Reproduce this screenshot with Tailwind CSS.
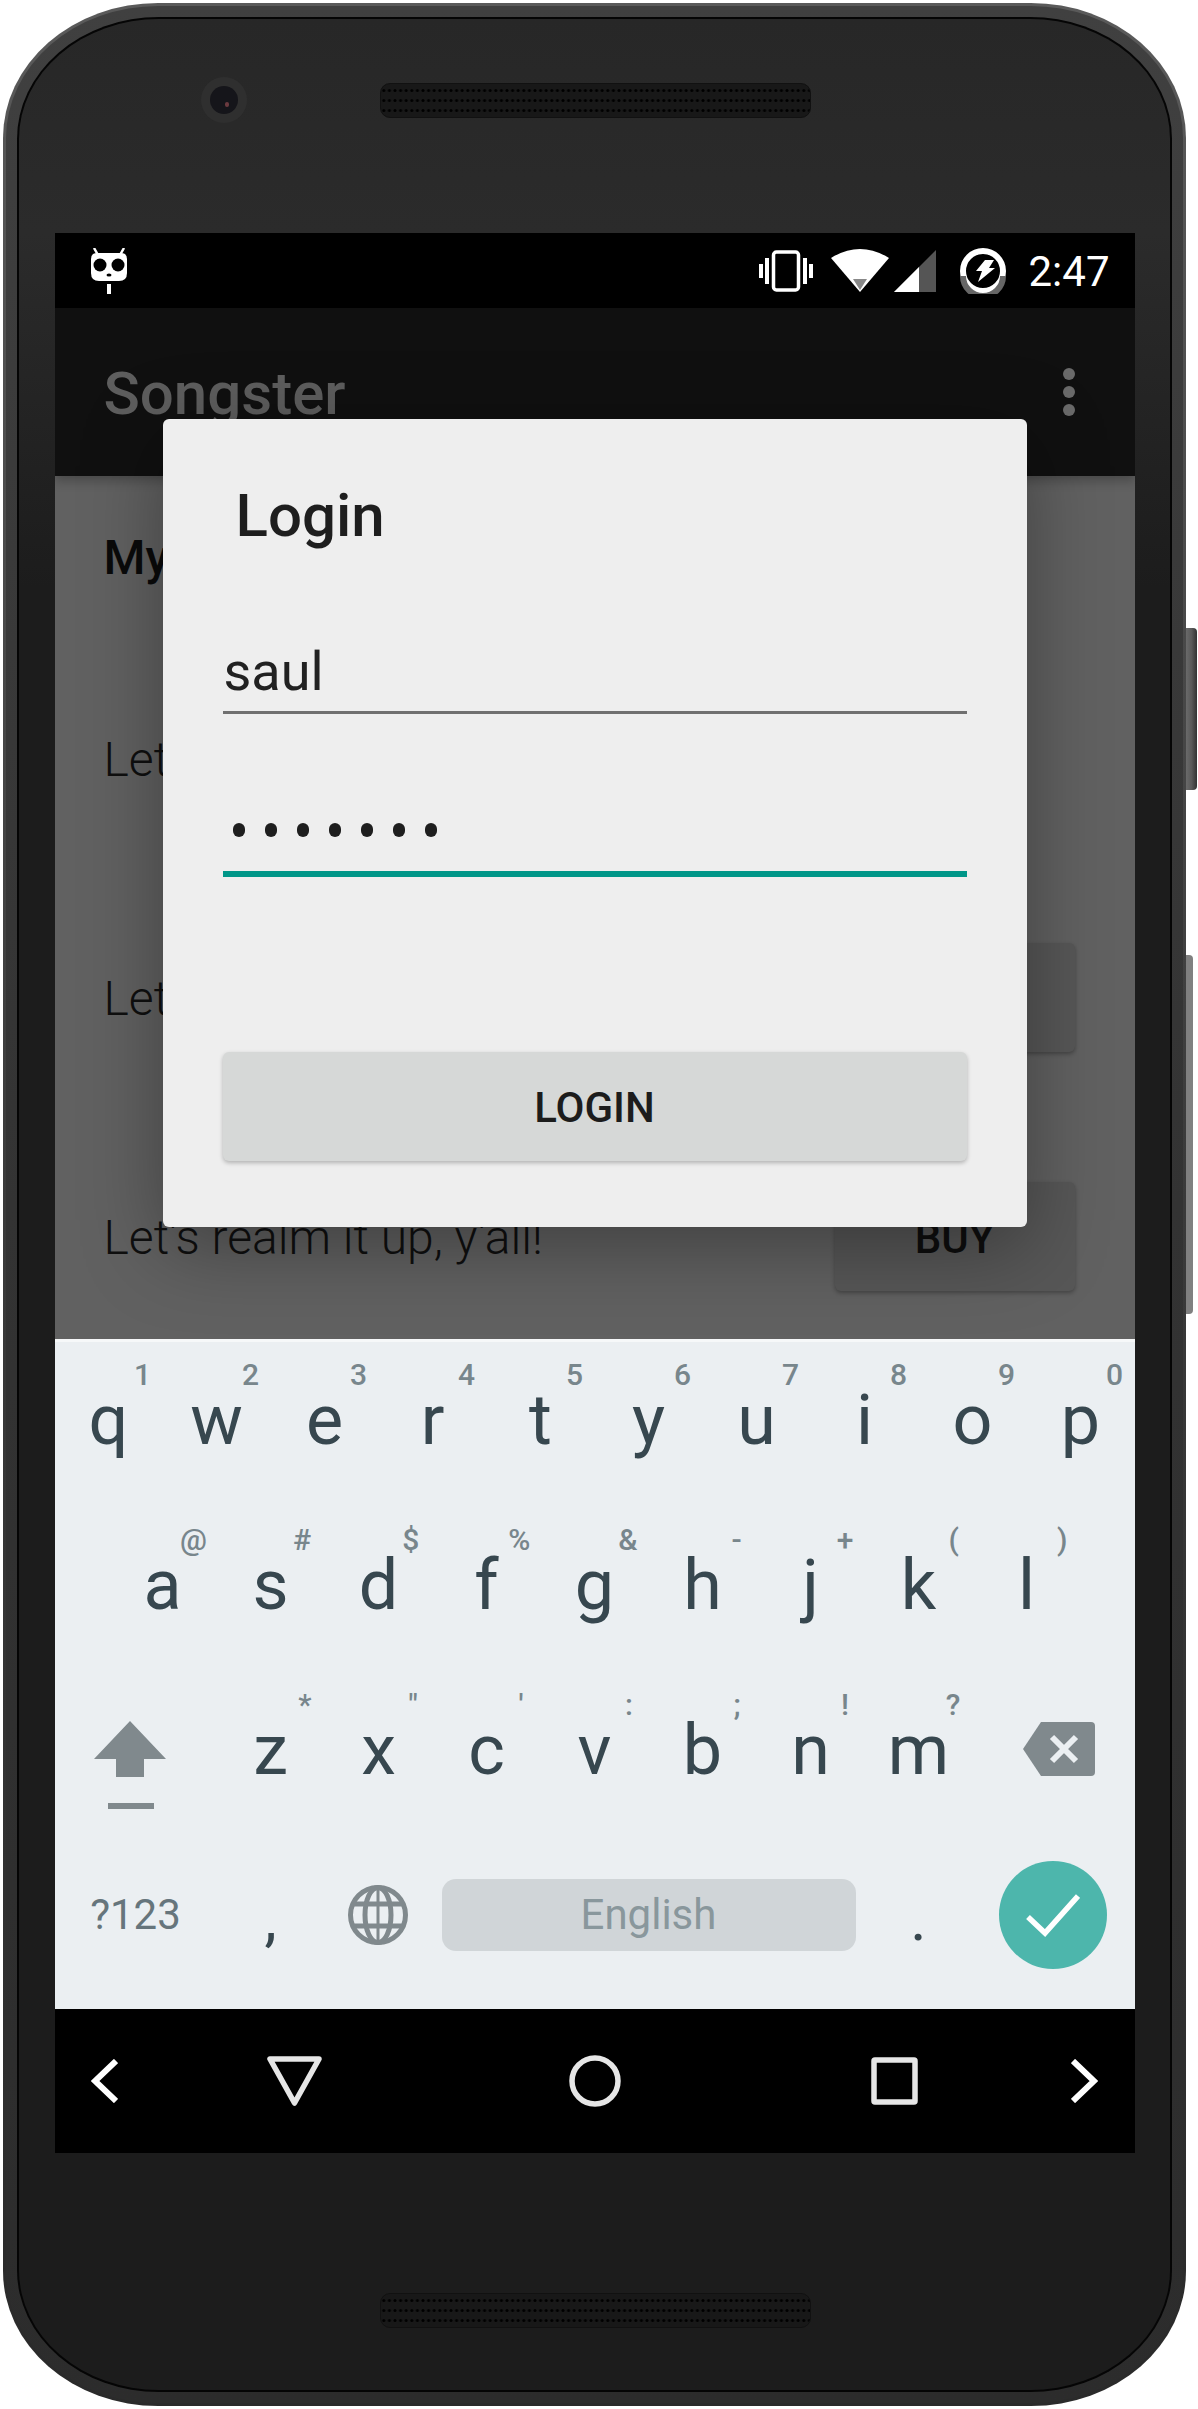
<!DOCTYPE html>
<html lang="en">

<head>
  <meta charset="UTF-8">
  <meta name="viewport" content="width=device-width, initial-scale=1.0">
  <title>Songster</title>
  <script src="https://cdn.jsdelivr.net/npm/@tailwindcss/browser@4"></script>
</head>

<body class="bg-white font-['Roboto',sans-serif] w-[1198px] h-[2409px] overflow-hidden relative">
  <!-- side buttons -->
  <div class="absolute left-[1186px] top-[628px] w-[11px] h-[162px] rounded-r-sm bg-gradient-to-r from-[#6a6a6a] via-[#5a5a5a] to-[#333]"></div>
  <div class="absolute left-[1186px] top-[955px] w-[7px] h-[359px] rounded-r-sm bg-[#808080]"></div>

  <!-- phone body -->
  <div class="absolute left-[3px] top-[3px] w-[1183px] h-[2403px] rounded-[155px/135px] bg-gradient-to-b from-[#5a5a5a] via-[#3a3a3a] to-[#2a2a2a] p-[3px]">
    <div class="w-full h-full rounded-[152px/132px] bg-gradient-to-b from-[#404040] via-[#333] to-[#2c2c2c] p-[11px]">
      <div class="w-full h-full rounded-[142px/122px] bg-[#050505] p-[2px]">
        <div class="w-full h-full rounded-[140px/120px] bg-[linear-gradient(#272727_0%,#2b2b2b_9%,#1c1c1c_24%,#1c1c1c_100%)] flex flex-col items-center overflow-hidden">

          <!-- top bezel -->
          <div class="h-[214px] w-full shrink-0 relative">
            <div class="absolute left-[182px] top-[58px] w-[46px] h-[46px] rounded-full bg-[#2f2f2f] flex items-center justify-center">
              <div class="w-[28px] h-[28px] rounded-full bg-[#15151a] relative">
                <div class="absolute left-[15px] top-[16px] w-[4px] h-[5px] rounded-full bg-[#6b3a3f]"></div>
              </div>
            </div>
            <div class="absolute left-[361px] top-[64px] w-[431px] h-[35px] rounded-[10px] bg-[#181818] border border-[#111] overflow-hidden">
              <svg width="430" height="33"><defs><pattern id="dotsTop" width="5.6" height="10" patternUnits="userSpaceOnUse"><circle cx="2.8" cy="6.500" r="1.500" fill="#000"/></pattern></defs><rect width="430" height="33" fill="url(#dotsTop)"/></svg>
            </div>
          </div>

          <!-- screen -->
          <div class="w-[1080px] h-[1920px] shrink-0 relative flex flex-col overflow-hidden">
            <!-- status bar -->
            <div class="h-[75px] bg-black flex items-center pl-[36px] pr-[25px] shrink-0">
              <svg width="36" height="46" viewBox="0 0 36 46">
                <path d="M3 0l4 7M33 0l-4 7" stroke="#fff" stroke-width="2.500"/>
                <path d="M6 5h24q6 0 6 6v14q0 8-8 8H8q-8 0-8-8V11q0-6 6-6z" fill="#fff"/>
                <circle cx="9" cy="17" r="6.500" fill="#000"/><circle cx="27" cy="17" r="6.500" fill="#000"/>
                <ellipse cx="18" cy="27" rx="2.500" ry="1.500" fill="#000"/>
                <rect x="16" y="36" width="4" height="10" fill="#fff"/>
              </svg>
              <div class="ml-auto flex items-center">
                <svg width="54" height="42" viewBox="0 0 54 42">
                  <rect x="14.500" y="2" width="25" height="38" rx="3" fill="none" stroke="#fff" stroke-width="3.500"/>
                  <path d="M0 14h4v14H0zM6 8h4v26H6zM44 8h4v26h-4zM50 14h4v14h-4z" fill="#fff"/>
                </svg>
                <svg class="ml-[18px]" width="58" height="44" viewBox="0 0 58 44">
                  <path d="M0 9Q29-9 58 9L29 43z" fill="#fff"/><path d="M22 30h14l-7 11z" fill="#888"/>
                </svg>
                <svg class="ml-[5px]" width="42" height="42" viewBox="0 0 42 42">
                  <path d="M0 42L42 0v42z" fill="#555"/><path d="M0 42L25 17v25z" fill="#fff"/>
                </svg>
                <svg class="ml-[24px]" width="46" height="46" viewBox="0 0 46 46">
                  <circle cx="23" cy="23" r="20" fill="none" stroke="#fff" stroke-width="6"/>
                  <path d="M3 28A20 20 0 0 0 43 28" fill="none" stroke="#666" stroke-width="6"/>
                  <path d="M25 12h9l-5 8h6L18 34l4-11h-6z" fill="#fff"/>
                </svg>
                <span class="ml-[23px] mt-[2px] text-[42px] leading-none text-white">2:47</span>
              </div>
            </div>

            <!-- app bar -->
            <div class="h-[168px] bg-[#101010] shrink-0 flex items-center pl-[49px] pr-[60px] relative z-10 shadow-[0_5px_10px_rgba(0,0,0,0.25)]">
              <span class="text-[60px] font-medium text-[#5e5e5e] leading-none mt-[4px]">Songster</span>
              <div class="ml-auto flex flex-col gap-[6px]">
                <div class="w-[12px] h-[12px] rounded-full bg-[#6a6a6a]"></div>
                <div class="w-[12px] h-[12px] rounded-full bg-[#6a6a6a]"></div>
                <div class="w-[12px] h-[12px] rounded-full bg-[#6a6a6a]"></div>
              </div>
            </div>

            <!-- song list, dimmed -->
            <div class="h-[863px] bg-[#616161] shrink-0 pl-[49px] pr-[60px] pt-[60px] flex flex-col">
              <div class="h-[44px] mb-[124px] text-[48px] leading-[44px] font-medium text-[#0a0a0a]">My</div>
              <div class="flex flex-col gap-[130px]">
                <div class="h-[109px] flex items-center text-[48px] font-light text-[#0f0f0f]"><span class="mt-[2px]">Let's realm it up, y'all!</span></div>
                <div class="h-[109px] flex items-center justify-between">
                  <span class="mt-[2px] text-[48px] font-light text-[#0f0f0f]">Let's realm it up, y'all!</span>
                  <div class="w-[240px] h-[109px] pt-[4px] rounded-[6px] bg-[#575757] shadow-[0_2px_4px_rgba(0,0,0,0.3)] flex items-center justify-center text-[42px] font-medium text-[#0e0e0e]">BUY</div>
                </div>
                <div class="h-[109px] flex items-center justify-between">
                  <span class="mt-[2px] text-[48px] font-light text-[#0f0f0f]">Let's realm it up, y'all!</span>
                  <div class="w-[240px] h-[109px] pt-[4px] rounded-[6px] bg-[#575757] shadow-[0_2px_4px_rgba(0,0,0,0.3)] flex items-center justify-center text-[42px] font-medium text-[#0e0e0e]">BUY</div>
                </div>
              </div>
            </div>

            <!-- keyboard -->
            <div class="h-[670px] bg-[#ebeff2] border-t-[3px] border-[#f6f8f9] shrink-0 flex flex-col">
              <div id="row1" class="flex h-[165px]"></div>
              <div id="row2" class="flex h-[165px] pl-[54px]"></div>
              <div class="flex h-[165px]">
                <div class="w-[150px] pt-[49px] flex justify-center">
                  <svg width="72" height="88" viewBox="0 0 72 88">
                    <path d="M36 0L72 38H50V56H22V38H0z" fill="#80898d"/>
                    <rect x="14" y="82" width="46" height="6" fill="#80898d"/>
                  </svg>
                </div>
                <div id="row3" class="flex ml-[12px]"></div>
                <div class="ml-[50px] pt-[50px]">
                  <svg width="72" height="54" viewBox="0 0 72 54">
                    <path d="M18 0H68q4 0 4 4V50q0 4-4 4H18L0 27z" fill="#80898d"/>
                    <path d="M29 15L53 39M53 15L29 39" stroke="#ebeff2" stroke-width="6"/>
                  </svg>
                </div>
              </div>
              <div class="flex items-center h-[172px] pb-[16px]">
                <div class="w-[162px] text-center text-[42px] leading-none text-[#66757c]">?123</div>
                <div class="w-[108px] text-center text-[62px] leading-none pt-[8px] text-[#37474f]">,</div>
                <div class="w-[106px] flex justify-center">
                  <svg width="60" height="60" viewBox="0 0 60 60" fill="none" stroke="#80898d" stroke-width="5">
                    <circle cx="30" cy="30" r="27.500"/>
                    <ellipse cx="30" cy="30" rx="13" ry="27.500"/>
                    <path d="M5 19H55M5 41H55" />
                    <path d="M30 3V57" stroke-width="3"/>
                  </svg>
                </div>
                <div class="w-[414px] h-[72px] ml-[11px] pb-[2px] rounded-[14px] bg-[#d0d5d8] flex items-center justify-center text-[42px] text-[#89979c]">English</div>
                <div class="w-[108px] ml-[9px] text-center text-[62px] leading-none pt-[8px] text-[#37474f]">.</div>
                <div class="w-[108px] h-[108px] ml-[26px] rounded-full bg-[#4db6ac] flex items-center justify-center">
                  <svg width="54" height="44" viewBox="0 0 54 44" fill="none" stroke="#fff" stroke-width="5.500">
                    <path d="M2 24L19 40L52 3"/>
                  </svg>
                </div>
              </div>
            </div>

            <!-- nav bar -->
            <div class="h-[144px] bg-black shrink-0 flex items-center pl-[36px]">
              <svg width="27" height="44" viewBox="0 0 27 44" fill="none" stroke="#fff" stroke-width="6"><path d="M25 2L4 22L25 42"/></svg>
              <svg class="ml-[149px]" width="55" height="50" viewBox="0 0 55 50" fill="none" stroke="#e6e6e6" stroke-width="5.500" stroke-linejoin="round"><path d="M3 3H52L27.500 47z"/></svg>
              <svg class="ml-[247px]" width="52" height="52" viewBox="0 0 52 52" fill="none" stroke="#e6e6e6" stroke-width="5.500"><circle cx="26" cy="26" r="23"/></svg>
              <svg class="ml-[250px]" width="47" height="48" viewBox="0 0 47 48" fill="none" stroke="#e6e6e6" stroke-width="5.500" stroke-linejoin="round"><rect x="3" y="3" width="41" height="42" rx="1"/></svg>
              <svg class="ml-[153px]" width="27" height="44" viewBox="0 0 27 44" fill="none" stroke="#fff" stroke-width="6"><path d="M2 2L23 22L2 42"/></svg>
            </div>

            <!-- login dialog -->
            <div class="absolute left-[108px] top-[186px] w-[864px] h-[808px] rounded-[6px] bg-[#eeeeee] shadow-[0_20px_80px_rgba(0,0,0,0.35)] pt-[62px] px-[60px] z-20 flex flex-col">
              <div class="pl-[13px] text-[60px] leading-[70px] font-medium text-[#1e1e1e]">Login</div>
              <div class="mt-[91px] h-[72px] border-b-[3px] border-[#707070] text-[54px] leading-[60px] pl-px text-[#212121]">saul</div>
              <div class="mt-[109px] h-[14px] pl-[10px] flex gap-[20px]">
                <div class="w-[12px] h-[14px] rounded-full bg-[#1e1e1e]"></div>
                <div class="w-[12px] h-[14px] rounded-full bg-[#1e1e1e]"></div>
                <div class="w-[12px] h-[14px] rounded-full bg-[#1e1e1e]"></div>
                <div class="w-[12px] h-[14px] rounded-full bg-[#1e1e1e]"></div>
                <div class="w-[12px] h-[14px] rounded-full bg-[#1e1e1e]"></div>
                <div class="w-[12px] h-[14px] rounded-full bg-[#1e1e1e]"></div>
                <div class="w-[12px] h-[14px] rounded-full bg-[#1e1e1e]"></div>
              </div>
              <div class="mt-[34px] h-[6px] bg-[#009688]"></div>
              <div class="mt-[175px] h-[109px] pt-[2px] rounded-[6px] bg-[#d6d8d7] shadow-[0_2px_4px_rgba(0,0,0,0.25)] flex items-center justify-center text-[42px] font-medium text-[#1c1c1c]">LOGIN</div>
            </div>
          </div>

          <!-- bottom bezel -->
          <div class="flex-1 w-full relative">
            <div class="absolute left-[361px] top-[140px] w-[431px] h-[35px] rounded-[10px] bg-[#181818] border border-[#111] overflow-hidden">
              <svg width="430" height="33"><defs><pattern id="dotsBottom" width="5.6" height="10" patternUnits="userSpaceOnUse"><circle cx="2.8" cy="6.500" r="1.500" fill="#000"/></pattern></defs><rect width="430" height="33" fill="url(#dotsBottom)"/></svg>
            </div>
          </div>
        </div>
      </div>
    </div>
  </div>

  <script>
    const rows = {
      row1: { keys: 'qwertyuiop', labels: '1234567890', start: 34, step: 0 },
      row2: { keys: 'asdfghjkl', labels: '@#$%&-+()', start: 31, step: 0.6 },
      row3: { keys: 'zxcvbnm', labels: '*"\':;!?', start: 34.5, step: 0 }
    };

    for (const id in rows) {
      const row = rows[id];
      const container = document.getElementById(id);
      row.keys.split('').forEach((key, i) => {
        const offset = row.start + i * row.step;
        const el = document.createElement('div');
        el.className = 'relative w-[108px] text-center text-[70px] leading-[157px] text-[#37474f]';
        el.textContent = key;

        const label = document.createElement('span');
        label.className = 'absolute top-[18px] w-[40px] text-center text-[30px] leading-[30px] font-medium text-[#78868c]';
        label.style.left = (54 + offset - 20) + 'px';
        label.textContent = row.labels[i];
        el.appendChild(label);

        container.appendChild(el);
      });
    }
  </script>
</body>

</html>
